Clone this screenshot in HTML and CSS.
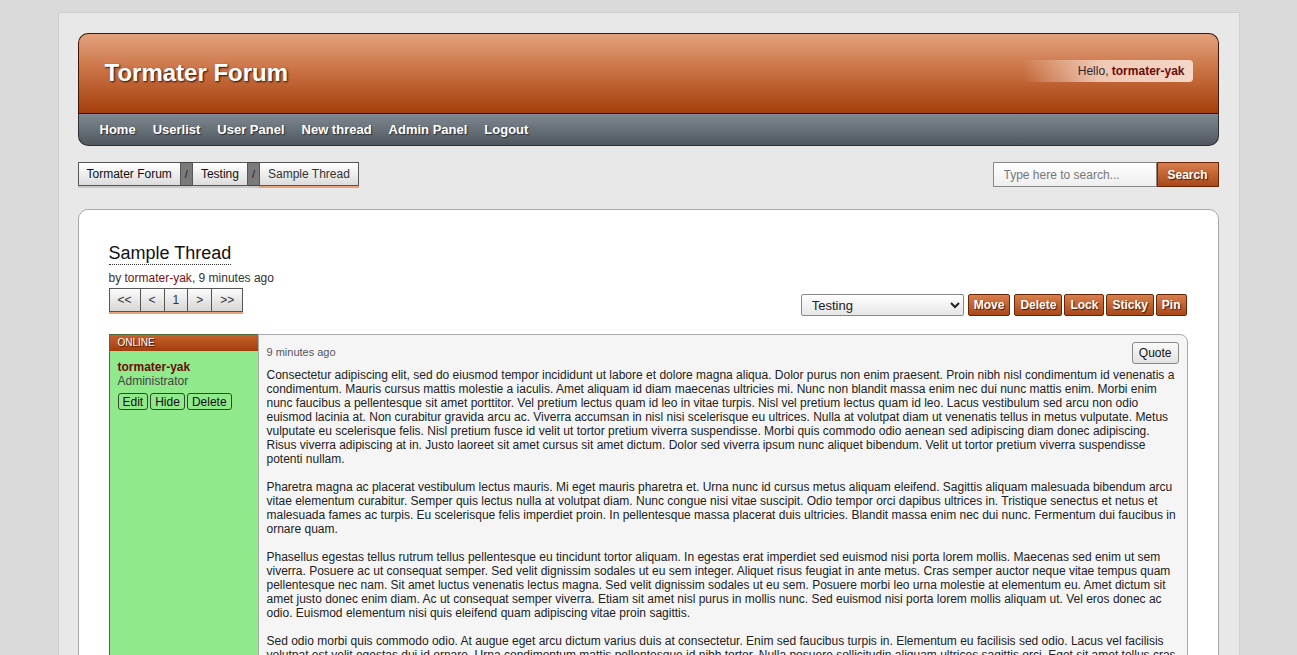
FILE: index.html
```html
<!DOCTYPE html>
<html lang="en">
<head>
    <meta charset="UTF-8">
    <title>Sample Thread - Tormater Forum</title>
    <link rel="stylesheet" href="styles.css">
</head>
<body>
    <div class="wrapper">
        <header class="site-header">
            <div class="header-top">
                <h1 class="forum-title">Tormater Forum</h1>
                <div class="hello">Hello, <a href="#">tormater-yak</a></div>
            </div>
            <nav class="main-nav">
                <a href="#">Home</a>
                <a href="#">Userlist</a>
                <a href="#">User Panel</a>
                <a href="#">New thread</a>
                <a href="#">Admin Panel</a>
                <a href="#">Logout</a>
            </nav>
        </header>

        <div class="toolbar">
            <div class="breadcrumb">
                <a href="#" class="crumb">Tormater Forum</a>
                <span class="crumb-sep">/</span>
                <a href="#" class="crumb">Testing</a>
                <span class="crumb-sep">/</span>
                <a href="#" class="crumb current">Sample Thread</a>
            </div>
            <form class="search">
                <input type="text" placeholder="Type here to search...">
                <button type="submit" class="orange-btn">Search</button>
            </form>
        </div>

        <main class="content">
            <h2 class="thread-title">Sample Thread</h2>
            <div class="thread-meta">by <a href="#">tormater-yak</a>, 9 minutes ago</div>

            <div class="thread-controls">
                <div class="pagination">
                    <a href="#">&lt;&lt;</a>
                    <a href="#">&lt;</a>
                    <a href="#">1</a>
                    <a href="#">&gt;</a>
                    <a href="#">&gt;&gt;</a>
                </div>
                <div class="mod-actions">
                    <select class="move-select">
                        <option>Testing</option>
                    </select>
                    <button class="orange-btn move-btn">Move</button>
                    <button class="orange-btn">Delete</button>
                    <button class="orange-btn">Lock</button>
                    <button class="orange-btn">Sticky</button>
                    <button class="orange-btn">Pin</button>
                </div>
            </div>

            <div class="post">
                <div class="post-user">
                    <div class="online">Online</div>
                    <div class="user-info">
                        <a href="#" class="username">tormater-yak</a>
                        <div class="role">Administrator</div>
                        <div class="user-actions">
                            <button>Edit</button>
                            <button>Hide</button>
                            <button>Delete</button>
                        </div>
                    </div>
                </div>
                <div class="post-body">
                    <div class="post-head">
                        <span class="post-time">9 minutes ago</span>
                        <button class="quote-btn">Quote</button>
                    </div>
                    <div class="post-text">
                        Consectetur adipiscing elit, sed do eiusmod tempor incididunt ut labore et dolore magna aliqua. Dolor purus non enim praesent. Proin nibh nisl condimentum id venenatis a condimentum. Mauris cursus mattis molestie a iaculis. Amet aliquam id diam maecenas ultricies mi. Nunc non blandit massa enim nec dui nunc mattis enim. Morbi enim nunc faucibus a pellentesque sit amet porttitor. Vel pretium lectus quam id leo in vitae turpis. Nisl vel pretium lectus quam id leo. Lacus vestibulum sed arcu non odio euismod lacinia at. Non curabitur gravida arcu ac. Viverra accumsan in nisl nisi scelerisque eu ultrices. Nulla at volutpat diam ut venenatis tellus in metus vulputate. Metus vulputate eu scelerisque felis. Nisl pretium fusce id velit ut tortor pretium viverra suspendisse. Morbi quis commodo odio aenean sed adipiscing diam donec adipiscing. Risus viverra adipiscing at in. Justo laoreet sit amet cursus sit amet dictum. Dolor sed viverra ipsum nunc aliquet bibendum. Velit ut tortor pretium viverra suspendisse potenti nullam.
                        <br><br>
                        Pharetra magna ac placerat vestibulum lectus mauris. Mi eget mauris pharetra et. Urna nunc id cursus metus aliquam eleifend. Sagittis aliquam malesuada bibendum arcu vitae elementum curabitur. Semper quis lectus nulla at volutpat diam. Nunc congue nisi vitae suscipit. Odio tempor orci dapibus ultrices in. Tristique senectus et netus et malesuada fames ac turpis. Eu scelerisque felis imperdiet proin. In pellentesque massa placerat duis ultricies. Blandit massa enim nec dui nunc. Fermentum dui faucibus in ornare quam.
                        <br><br>
                        Phasellus egestas tellus rutrum tellus pellentesque eu tincidunt tortor aliquam. In egestas erat imperdiet sed euismod nisi porta lorem mollis. Maecenas sed enim ut sem viverra. Posuere ac ut consequat semper. Sed velit dignissim sodales ut eu sem integer. Aliquet risus feugiat in ante metus. Cras semper auctor neque vitae tempus quam pellentesque nec nam. Sit amet luctus venenatis lectus magna. Sed velit dignissim sodales ut eu sem. Posuere morbi leo urna molestie at elementum eu. Amet dictum sit amet justo donec enim diam. Ac ut consequat semper viverra. Etiam sit amet nisl purus in mollis nunc. Sed euismod nisi porta lorem mollis aliquam ut. Vel eros donec ac odio. Euismod elementum nisi quis eleifend quam adipiscing vitae proin sagittis.
                        <br><br>
                        Sed odio morbi quis commodo odio. At augue eget arcu dictum varius duis at consectetur. Enim sed faucibus turpis in. Elementum eu facilisis sed odio. Lacus vel facilisis volutpat est velit egestas dui id ornare. Urna condimentum mattis pellentesque id nibh tortor. Nulla posuere sollicitudin aliquam ultrices sagittis orci. Eget sit amet tellus cras adipiscing enim eu turpis egestas.
                    </div>
                </div>
            </div>
        </main>
    </div>
</body>
</html>
```

FILE: styles.css
```css
body {
    margin: 0;
    background-color: #dadada;
    font-family: 'Liberation Sans', Arial, sans-serif;
    font-size: 13px;
    color: #222;
}

a {
    text-decoration: none;
}

.wrapper {
    width: 1141px;
    margin: 12px auto 0;
    padding: 20px 20px 20px 19px;
    background-color: #e8e8e8;
    border: 1px solid #cfcfcf;
    border-bottom: none;
}

/* header */
.header-top {
    display: flex;
    justify-content: space-between;
    align-items: center;
    height: 79px;
    padding: 0 25px 0 26px;
    background: linear-gradient(#e4a27c, #c76e40 50%, #a43f0c);
    border: 1px solid #3b1404;
    border-bottom: none;
    border-radius: 10px 10px 0 0;
}

.forum-title {
    margin: 0;
    padding-bottom: 2px;
    font-size: 24px;
    color: #fff;
    text-shadow: 1px 1px 2px #2b0d00;
}

.hello {
    padding: 4px 8px 4px 55px;
    border-radius: 4px;
    font-size: 12px;
    color: #2a2a2a;
    background: linear-gradient(to right, rgba(245, 215, 200, 0), rgba(245, 215, 200, 0.85) 45%, #f5d7c8);
    margin-top: -6px;
}

.hello a {
    color: #6b0a0a;
    font-weight: bold;
}

.main-nav {
    display: flex;
    gap: 17px;
    height: 31px;
    align-items: center;
    padding: 0 20px 0 21px;
    background: linear-gradient(#7f8991, #50575e);
    border: 1px solid #2c2f33;
    border-top: 1px solid #1c1c1c;
    border-radius: 0 0 10px 10px;
}

.main-nav a {
    color: #fff;
    font-weight: bold;
    font-size: 13px;
    text-shadow: 1px 1px 1px #2a2e33;
}

/* breadcrumb + search */
.toolbar {
    display: flex;
    justify-content: space-between;
    align-items: flex-start;
    margin-top: 16px;
}

.breadcrumb {
    display: flex;
    height: 24px;
    box-shadow: 0 2px 0 #c9c9c9;
}

.crumb {
    display: flex;
    align-items: center;
    padding: 0 8px;
    font-size: 12px;
    color: #111;
    background: linear-gradient(#fff, #dcdcdc);
    border: 1px solid #555;
}

.crumb.current {
    color: #333;
    box-shadow: 0 2px 0 #e7a27c;
}

.crumb-sep {
    display: flex;
    align-items: center;
    padding: 0 4px;
    font-size: 11px;
    color: #222;
    background-color: #7a7a7a;
    border-top: 1px solid #444;
    border-bottom: 1px solid #444;
}

.search {
    display: flex;
    margin: 0;
    height: 25px;
}

.search input {
    width: 146px;
    padding: 0 6px 0 10px;
    border: 1px solid #888;
    font-family: inherit;
    font-size: 12px;
    background: linear-gradient(#fff, #eee);
}

.search input::placeholder {
    color: #777;
}

.search .orange-btn {
    width: 62px;
    border-radius: 0;
}

.orange-btn {
    padding: 0 5px;
    font-family: inherit;
    font-size: 12px;
    font-weight: bold;
    color: #fff;
    text-shadow: 1px 1px 1px #4a1a00;
    background: linear-gradient(#d87e4c, #a9491b);
    border: 1px solid #6a2706;
    border-radius: 2px;
    cursor: pointer;
}

/* thread */
.content {
    margin-top: 22px;
    padding: 30px 30px 40px;
    background-color: #fff;
    border: 1px solid #a8a8a8;
    border-radius: 10px;
}

.thread-title {
    display: inline-block;
    margin: 2px 0 0;
    font-size: 18px;
    font-weight: normal;
    color: #111;
    border-bottom: 1px dotted #333;
    line-height: 22px;
}

.thread-meta {
    margin-top: 6px;
    font-size: 12px;
    color: #333;
}

.thread-meta a {
    color: #7a1010;
}

.thread-controls {
    display: flex;
    justify-content: space-between;
    align-items: flex-start;
    margin-top: 3px;
}

.pagination {
    display: flex;
    height: 24px;
    box-shadow: 0 2px 0 #e7a27c;
}

.pagination a {
    display: flex;
    align-items: center;
    justify-content: center;
    padding: 0 8px;
    font-size: 12px;
    color: #333;
    background: linear-gradient(#fbfbfb, #d6d6d6);
    border: 1px solid #555;
    border-left: none;
}

.pagination a:first-child {
    border-left: 1px solid #555;
}

.mod-actions {
    display: flex;
    align-items: center;
    gap: 2px;
    margin: 6px 1px 0 0;
    height: 22px;
}

.mod-actions .orange-btn {
    height: 22px;
}

.move-select {
    width: 163px;
    height: 22px;
    margin-right: 2px;
    padding: 0 6px;
    font-family: inherit;
    font-size: 13px;
    color: #222;
    background: linear-gradient(#fff, #e6e6e6);
    border: 1px solid #888;
    border-radius: 2px;
}

.move-btn {
    margin-right: 2px;
}

/* post */
.post {
    display: flex;
    margin-top: 18px;
}

.post-user {
    width: 148px;
    flex-shrink: 0;
    background-color: #90ea8c;
    border: 1px solid #47713e;
    border-right: none;
}

.online {
    height: 16px;
    padding-left: 8px;
    font-size: 10px;
    line-height: 16px;
    text-transform: uppercase;
    color: #fff;
    text-shadow: 1px 1px 1px #3a1400;
    background: linear-gradient(#c4622c, #a33e0c);
}

.user-info {
    padding: 8px 8px;
}

.username {
    font-size: 12px;
    font-weight: bold;
    color: #6b0a0a;
}

.role {
    color: #444;
    font-size: 12px;
}

.user-actions {
    display: flex;
    gap: 2px;
    margin-top: 5px;
}

.user-actions button {
    padding: 0 4px;
    height: 17px;
    font-family: inherit;
    font-size: 12px;
    color: #111;
    background: transparent;
    border: 1px solid #2f4a2c;
    border-radius: 3px;
}

.post-body {
    flex: 1;
    padding: 7px 8px 10px;
    background-color: #f5f5f5;
    border: 1px solid #aaa;
    border-radius: 0 8px 0 0;
}

.post-head {
    display: flex;
    justify-content: space-between;
    align-items: flex-start;
}

.post-time {
    margin-top: 4px;
    font-size: 11px;
    color: #555;
}

.quote-btn {
    height: 22px;
    padding: 0 6px;
    font-family: inherit;
    font-size: 12px;
    color: #111;
    background: linear-gradient(#fafafa, #e2e2e2);
    border: 1px solid #888;
    border-radius: 3px;
}

.post-text {
    margin-top: 4px;
    font-size: 12px;
    line-height: 14px;
    color: #222;
}
```
